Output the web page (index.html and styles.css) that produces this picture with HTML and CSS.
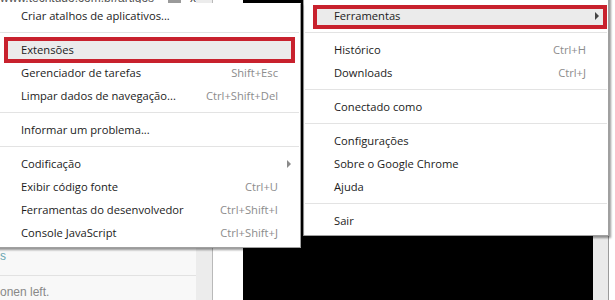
FILE: index.html
```html
<!DOCTYPE html>
<html lang="pt-BR">
<head>
    <meta charset="UTF-8">
    <meta name="viewport" content="width=device-width, initial-scale=1.0">
    <title>Menu do Chrome - Ferramentas</title>
    <link rel="stylesheet" href="styles.css">
</head>
<body>

<!-- Browser window behind the menus -->
<div class="backdrop">
    <div class="page">
        <div class="urlbar">
            <span class="url">www.techtudo.com.br/artigos</span>
            <span class="urlbox"></span>
            <span class="urlx">x</span>
        </div>
        <div class="feed-item"><span class="link">s</span></div>
        <div class="feed-text">onen left.</div>
    </div>
    <div class="scroll"></div>
    <div class="gap"></div>
    <div class="video"></div>
    <div class="side"></div>
</div>

<!-- Chrome menu with the Ferramentas submenu open -->
<div class="menus">

    <div class="menu submenu">
        <div class="item"><span class="label">Criar atalhos de aplicativos...</span><span class="key"></span><span class="sub"></span></div>
        <div class="sep"></div>
        <div class="item marked"><span class="label">Extensões</span><span class="key"></span><span class="sub"></span></div>
        <div class="item"><span class="label">Gerenciador de tarefas</span><span class="key">Shift+Esc</span><span class="sub"></span></div>
        <div class="item"><span class="label">Limpar dados de navegação...</span><span class="key">Ctrl+Shift+Del</span><span class="sub"></span></div>
        <div class="sep"></div>
        <div class="item"><span class="label">Informar um problema...</span><span class="key"></span><span class="sub"></span></div>
        <div class="sep"></div>
        <div class="item"><span class="label">Codificação</span><span class="key"></span><span class="sub"><i class="arrow light"></i></span></div>
        <div class="item"><span class="label">Exibir código fonte</span><span class="key">Ctrl+U</span><span class="sub"></span></div>
        <div class="item"><span class="label">Ferramentas do desenvolvedor</span><span class="key">Ctrl+Shift+I</span><span class="sub"></span></div>
        <div class="item"><span class="label">Console JavaScript</span><span class="key">Ctrl+Shift+J</span><span class="sub"></span></div>
    </div>

    <div class="menu main">
        <div class="item"><span class="label">Imprimir...</span><span class="key">Ctrl+P</span><span class="sub"></span></div>
        <div class="item marked open"><span class="label">Ferramentas</span><span class="key"></span><span class="sub"><i class="arrow"></i></span></div>
        <div class="sep"></div>
        <div class="item"><span class="label">Histórico</span><span class="key">Ctrl+H</span><span class="sub"></span></div>
        <div class="item"><span class="label">Downloads</span><span class="key">Ctrl+J</span><span class="sub"></span></div>
        <div class="sep"></div>
        <div class="item"><span class="label">Conectado como</span><span class="key"></span><span class="sub"></span></div>
        <div class="sep"></div>
        <div class="item"><span class="label">Configurações</span><span class="key"></span><span class="sub"></span></div>
        <div class="item"><span class="label">Sobre o Google Chrome</span><span class="key"></span><span class="sub"></span></div>
        <div class="item"><span class="label">Ajuda</span><span class="key"></span><span class="sub"></span></div>
        <div class="sep"></div>
        <div class="item"><span class="label">Sair</span><span class="key"></span><span class="sub"></span></div>
    </div>

</div>

</body>
</html>
```

FILE: styles.css
```css
body {
    margin: 0;
    width: 615px;
    height: 300px;
    overflow: hidden;
    position: relative;
    background-color: #fff;
    font-family: "Open Sans", "Noto Sans", sans-serif;
}

/* background window */
.backdrop {
    display: flex;
    height: 300px;
}
.page {
    width: 196px;
    background-color: #f8f8f8;
    font-family: Arial, "Liberation Sans", sans-serif;
    font-size: 12px;
}
.urlbar {
    height: 4px;
    overflow: hidden;
    display: flex;
    align-items: flex-end;
    background-color: #fff;
}
.url {
    color: #555;
    line-height: 12px;
    margin-top: -9px;
}
.urlbox {
    width: 34px;
    height: 4px;
    margin-left: 14px;
    background-color: #9a9a9a;
}
.urlx {
    color: #444;
    line-height: 12px;
    margin: -9px 0 0 9px;
}
.feed-item {
    height: 272px;
    box-sizing: border-box;
    border-bottom: 1px solid #e2e2e2;
    display: flex;
    align-items: flex-end;
    padding-bottom: 12px;
}
.link {
    color: #6aa6b0;
}
.feed-text {
    color: #888;
    padding-top: 9px;
}
.scroll {
    width: 16px;
    background-color: #ececec;
    border-right: 1px solid #b9b9b9;
}
.gap {
    width: 30px;
    background-color: #fff;
}
.video {
    width: 350px;
    background-color: #000;
}
.side {
    width: 15px;
    background-color: #eaeaea;
    border-right: 1px solid #9a9a9a;
}

/* menus */
.menus {
    position: absolute;
    top: 3px;
    left: -10px;
    display: flex;
    align-items: flex-start;
}
.menu {
    position: relative;
    background-color: #fff;
    border: 1px solid #a0a0a0;
    box-shadow: 2px 2px 2px rgba(0, 0, 0, 0.4);
    font-size: 11.2px;
    color: #1b1b1b;
}
.submenu {
    z-index: 2;
    width: 309px;
    border-top-color: #fff;
    padding: 0 0 3px 0;
}
.main {
    z-index: 1;
    width: 304px;
    margin: -26px 0 0 2px;
    padding: 3px 0;
}
.item {
    position: relative;
    display: flex;
    height: 23px;
    line-height: 23px;
    padding: 0 9px 0 30px;
}
.label {
    flex: 1;
    white-space: nowrap;
}
.key {
    color: #8c8c8c;
    white-space: nowrap;
}
.sub {
    width: 13px;
    display: flex;
    justify-content: flex-end;
    align-items: center;
}
.arrow {
    width: 0;
    height: 0;
    border-left: 4px solid #444;
    border-top: 4px solid transparent;
    border-bottom: 4px solid transparent;
}
.arrow.light {
    border-left-color: #8a8a8a;
}
.sep {
    height: 1px;
    margin: 5px 1px;
    background-color: #e3e3e3;
}

/* highlighted rows with the red marker */
.marked::after {
    content: "";
    position: absolute;
    z-index: -1;
    top: -1px;
    bottom: -2px;
    left: 13px;
    right: 5px;
    background-color: #ebebeb;
    border: 4px solid #c8212d;
}
.main .marked::after {
    top: 1px;
    left: 9px;
    right: 1px;
}
```
